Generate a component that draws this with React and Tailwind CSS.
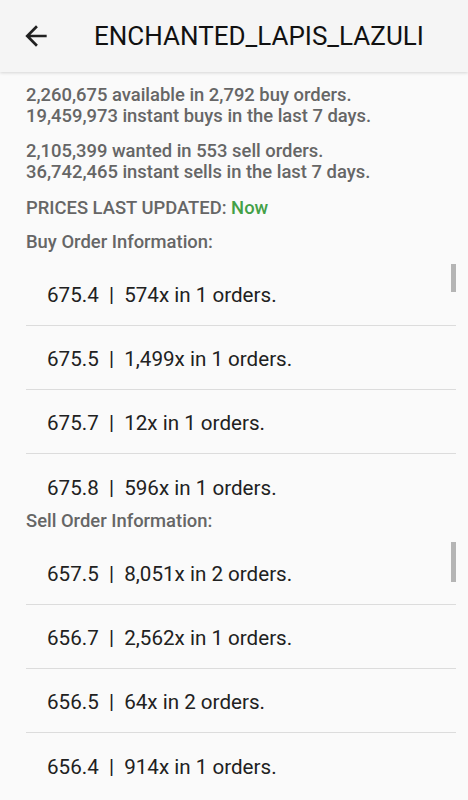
import React from "react";

const buyOrders = [
  { price: "675.4", amount: "574x", orders: 1 },
  { price: "675.5", amount: "1,499x", orders: 1 },
  { price: "675.7", amount: "12x", orders: 1 },
  { price: "675.8", amount: "596x", orders: 1 },
];

const sellOrders = [
  { price: "657.5", amount: "8,051x", orders: 2 },
  { price: "656.7", amount: "2,562x", orders: 1 },
  { price: "656.5", amount: "64x", orders: 2 },
  { price: "656.4", amount: "914x", orders: 1 },
];

const OrderList = ({ items, barTop, barHeight }) => (
  <div className="relative h-[248px] overflow-hidden">
    {items.map((item, i) => (
      <div
        key={item.price}
        className={`flex h-[64px] items-center pl-[21px] pt-[4px] text-[20.6px] font-normal text-[#212121] ${
          i < items.length - 1 ? "border-b border-[#dcdcdc]" : ""
        }`}
      >
        {item.price}&nbsp;&nbsp;|&nbsp;&nbsp;{item.amount} in {item.orders} orders.
      </div>
    ))}
    {/* fake scrollbar */}
    <div
      className={`absolute right-0 w-[5px] bg-[#b5b5b5] ${barTop} ${barHeight}`}
    />
  </div>
);

export default function App() {
  return (
    <div
      className="min-h-screen w-[468px] bg-[#fafafa]"
      style={{ fontFamily: "Roboto, 'Noto Sans', sans-serif" }}
    >
      {/* Toolbar */}
      <div className="flex h-[72px] items-center bg-[#f5f5f5] shadow-[0_1px_3px_rgba(0,0,0,0.15)]">
        <svg
          className="ml-[20px] h-[32px] w-[32px]"
          viewBox="0 0 24 24"
          fill="#212121"
        >
          <path d="M20 11H7.83l5.59-5.59L12 4l-8 8 8 8 1.41-1.41L7.83 13H20v-2z" />
        </svg>
        <h1 className="ml-[42px] text-[26px] font-normal text-[#111]">
          ENCHANTED_LAPIS_LAZULI
        </h1>
      </div>

      <div className="pl-[26px] pr-[12px] pt-[12px] text-[18.4px] font-medium leading-[21px] text-[#666]">
        <p>
          2,260,675 available in 2,792 buy orders.
          <br />
          19,459,973 instant buys in the last 7 days.
        </p>
        <p className="mt-[14px]">
          2,105,399 wanted in 553 sell orders.
          <br />
          36,742,465 instant sells in the last 7 days.
        </p>
        <p className="mt-[15px]">
          PRICES LAST UPDATED: <span className="text-[#43a047]">Now</span>
        </p>
        <p className="mt-[13px] mb-[10px]">Buy Order Information:</p>
        <OrderList items={buyOrders} barTop="top-[2px]" barHeight="h-[28px]" />
        <p className="mb-[10px]">Sell Order Information:</p>
        <OrderList items={sellOrders} barTop="top-[1px]" barHeight="h-[40px]" />
      </div>
    </div>
  );
}
